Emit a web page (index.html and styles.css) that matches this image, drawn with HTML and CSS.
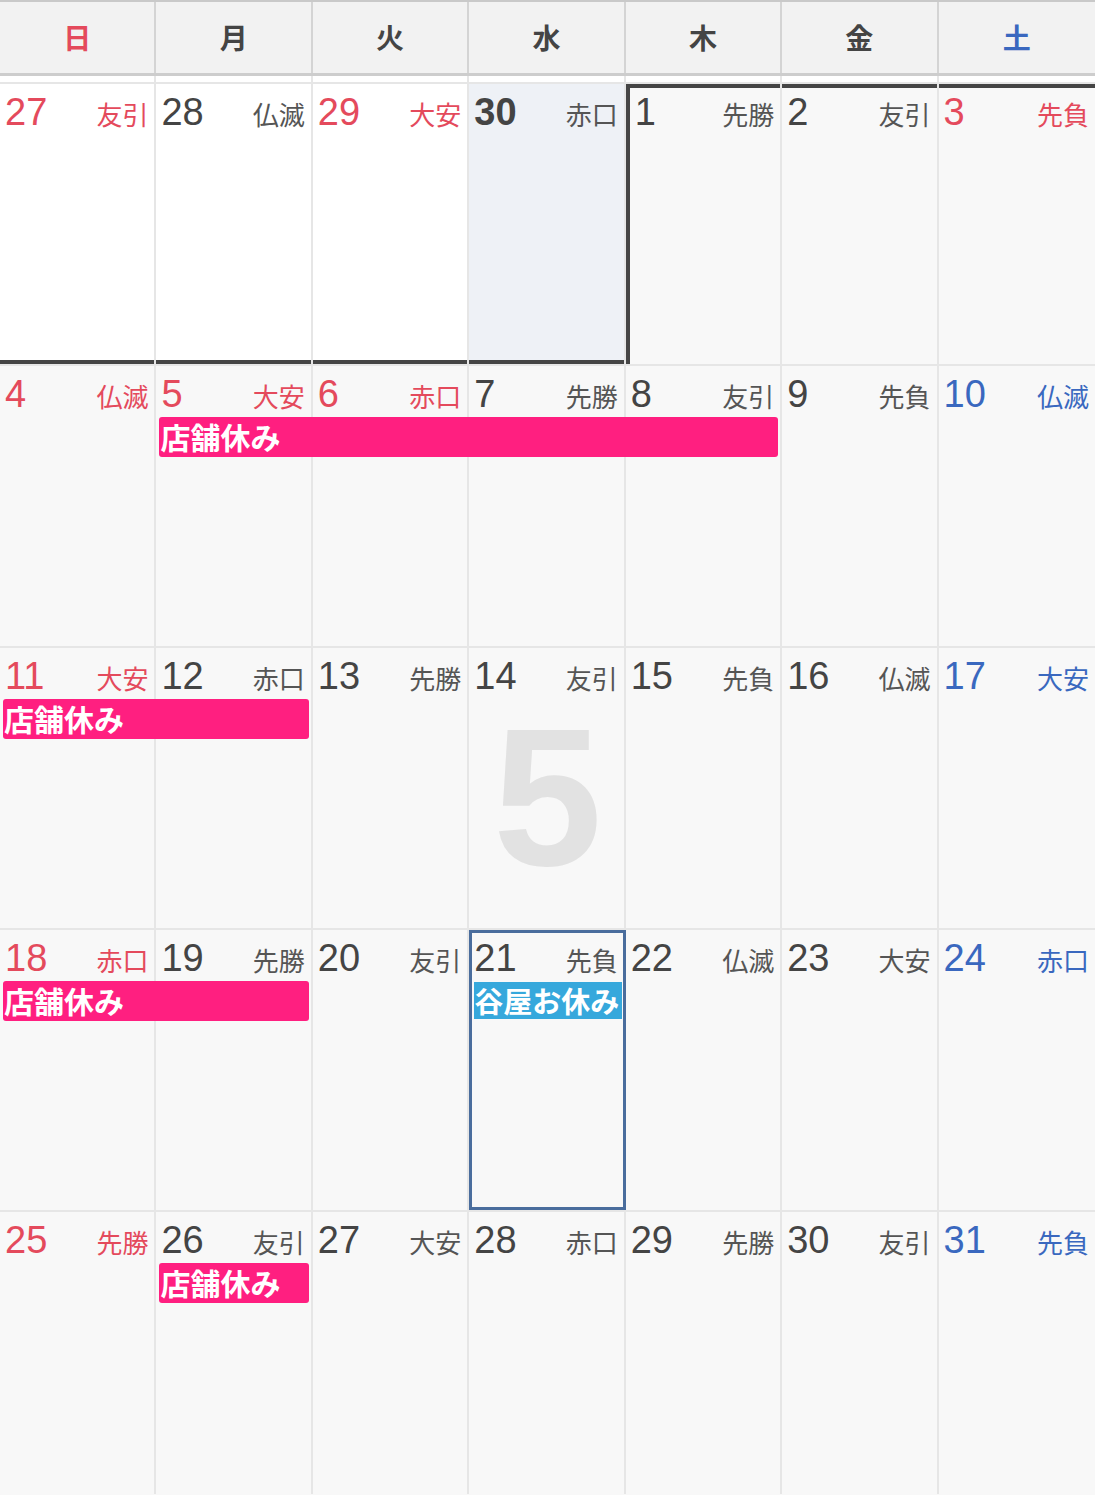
FILE: index.html
```html
<!DOCTYPE html>
<html>
<head>
    <title>カレンダー 2014年5月</title>
    <link rel="stylesheet" href="styles.css">
</head>
<body>
    <div class="head">
        <div class="hd sun">日</div>
        <div class="hd">月</div>
        <div class="hd">火</div>
        <div class="hd">水</div>
        <div class="hd">木</div>
        <div class="hd">金</div>
        <div class="hd sat">土</div>
    </div>
    <div class="gap">
        <div></div><div></div><div></div><div></div><div></div><div></div><div></div>
    </div>

    <div class="week">
        <div class="cell prev sun edge-b"><span class="num">27</span><span class="rk">友引</span></div>
        <div class="cell prev edge-b"><span class="num">28</span><span class="rk">仏滅</span></div>
        <div class="cell prev sun edge-b"><span class="num">29</span><span class="rk">大安</span></div>
        <div class="cell prev today edge-b"><span class="num">30</span><span class="rk">赤口</span></div>
        <div class="cell edge-tl"><span class="num">1</span><span class="rk">先勝</span></div>
        <div class="cell edge-t"><span class="num">2</span><span class="rk">友引</span></div>
        <div class="cell sun edge-t"><span class="num">3</span><span class="rk">先負</span></div>
    </div>

    <div class="week">
        <div class="cell sun"><span class="num">4</span><span class="rk">仏滅</span></div>
        <div class="cell sun"><span class="num">5</span><span class="rk">大安</span></div>
        <div class="cell sun"><span class="num">6</span><span class="rk">赤口</span></div>
        <div class="cell"><span class="num">7</span><span class="rk">先勝</span></div>
        <div class="cell"><span class="num">8</span><span class="rk">友引</span></div>
        <div class="cell"><span class="num">9</span><span class="rk">先負</span></div>
        <div class="cell sat"><span class="num">10</span><span class="rk">仏滅</span></div>
        <div class="ev pink from2 span4">店舗休み</div>
    </div>

    <div class="week">
        <div class="cell sun"><span class="num">11</span><span class="rk">大安</span></div>
        <div class="cell"><span class="num">12</span><span class="rk">赤口</span></div>
        <div class="cell"><span class="num">13</span><span class="rk">先勝</span></div>
        <div class="cell"><span class="num">14</span><span class="rk">友引</span></div>
        <div class="cell"><span class="num">15</span><span class="rk">先負</span></div>
        <div class="cell"><span class="num">16</span><span class="rk">仏滅</span></div>
        <div class="cell sat"><span class="num">17</span><span class="rk">大安</span></div>
        <div class="mark">5</div>
        <div class="ev pink from1 span2">店舗休み</div>
    </div>

    <div class="week">
        <div class="cell sun"><span class="num">18</span><span class="rk">赤口</span></div>
        <div class="cell"><span class="num">19</span><span class="rk">先勝</span></div>
        <div class="cell"><span class="num">20</span><span class="rk">友引</span></div>
        <div class="cell picked"><span class="num">21</span><span class="rk">先負</span></div>
        <div class="cell"><span class="num">22</span><span class="rk">仏滅</span></div>
        <div class="cell"><span class="num">23</span><span class="rk">大安</span></div>
        <div class="cell sat"><span class="num">24</span><span class="rk">赤口</span></div>
        <div class="ev pink from1 span2">店舗休み</div>
        <div class="ev blue from4 span1 inset">谷屋お休み</div>
    </div>

    <div class="week last">
        <div class="cell sun"><span class="num">25</span><span class="rk">先勝</span></div>
        <div class="cell"><span class="num">26</span><span class="rk">友引</span></div>
        <div class="cell"><span class="num">27</span><span class="rk">大安</span></div>
        <div class="cell"><span class="num">28</span><span class="rk">赤口</span></div>
        <div class="cell"><span class="num">29</span><span class="rk">先勝</span></div>
        <div class="cell"><span class="num">30</span><span class="rk">友引</span></div>
        <div class="cell sat"><span class="num">31</span><span class="rk">先負</span></div>
        <div class="ev pink from2 span1">店舗休み</div>
    </div>
</body>
</html>
```

FILE: styles.css
```css
body { margin: 0; background: #f8f8f8; font-family: "Liberation Sans", "Noto Sans CJK JP", sans-serif; color: #444; }

.head { display: grid; grid-template-columns: repeat(7, minmax(0, 1fr)); height: 76px; box-sizing: border-box; border-top: 2px solid #c9c9c9; border-bottom: 3px solid #cdcdcd; background: #f2f2f2; }
.hd { display: flex; align-items: center; justify-content: center; font-size: 28px; font-weight: bold; color: #444; border-right: 2px solid #d4d4d4; padding-bottom: 1px; }
.hd:last-child { border-right: none; }
.hd.sun { color: #e44a5c; }
.hd.sat { color: #3a68bf; }

.gap { display: grid; grid-template-columns: repeat(7, minmax(0, 1fr)); height: 6px; background: #fff; }
.gap div { border-right: 2px solid #e6e6e6; }
.gap div:last-child { border-right: none; }

.week { display: grid; grid-template-columns: repeat(7, minmax(0, 1fr)); grid-template-rows: 51px 40px 1fr; height: 282px; box-sizing: border-box; border-top: 2px solid #e6e6e6; }
.week.last { height: 284px; }

.cell { grid-row: 1 / -1; display: flex; justify-content: space-between; align-items: baseline; padding: 9px 6px 0 5px; border-right: 2px solid #e6e6e6; background: #f8f8f8; min-width: 0; }
.cell:nth-child(1) { grid-column: 1; }
.cell:nth-child(2) { grid-column: 2; }
.cell:nth-child(3) { grid-column: 3; }
.cell:nth-child(4) { grid-column: 4; }
.cell:nth-child(5) { grid-column: 5; }
.cell:nth-child(6) { grid-column: 6; }
.cell:nth-child(7) { grid-column: 7; border-right: none; }
.cell.prev { background: #fff; }
.cell.today { background: #eef1f6; }
.cell.today .num { font-weight: bold; }

.num { font-size: 38px; line-height: 1; color: #444; }
.rk { font-size: 26px; color: #555; font-family: "Noto Sans CJK JP", sans-serif; }
.sun .num, .sun .rk { color: #e44a5c; }
.sat .num, .sat .rk { color: #3a68bf; }

.edge-b { box-shadow: inset 0 -4px 0 #454545; }
.edge-t { box-shadow: inset 0 4px 0 #454545; }
.edge-tl { box-shadow: inset 4px 4px 0 #454545; padding-left: 9px; }

.picked { outline: 3px solid #4a6d9d; outline-offset: -3px; }

.mark { grid-column: 1 / -1; grid-row: 1 / -1; place-self: center; font-size: 196px; font-weight: bold; color: #e2e2e2; line-height: 1; padding-top: 20px; z-index: 1; }

.ev { grid-row: 2; z-index: 2; margin: 0 4px 0 3px; border-radius: 3px; color: #fff; font-size: 30px; font-weight: bold; font-family: "Noto Sans CJK JP", sans-serif; line-height: 39px; white-space: nowrap; padding-left: 1px; }
.ev.pink { background: #ff1f80; }
.ev.blue { background: #36a8dc; border-radius: 0; overflow: hidden; }
.ev.inset { margin: 1px 4px 2px 5px; line-height: 37px; padding-left: 0; font-size: 29px; }

.from1 { grid-column-start: 1; }
.from2 { grid-column-start: 2; }
.from4 { grid-column-start: 4; }
.span1 { grid-column-end: span 1; }
.span2 { grid-column-end: span 2; }
.span4 { grid-column-end: span 4; }
```
